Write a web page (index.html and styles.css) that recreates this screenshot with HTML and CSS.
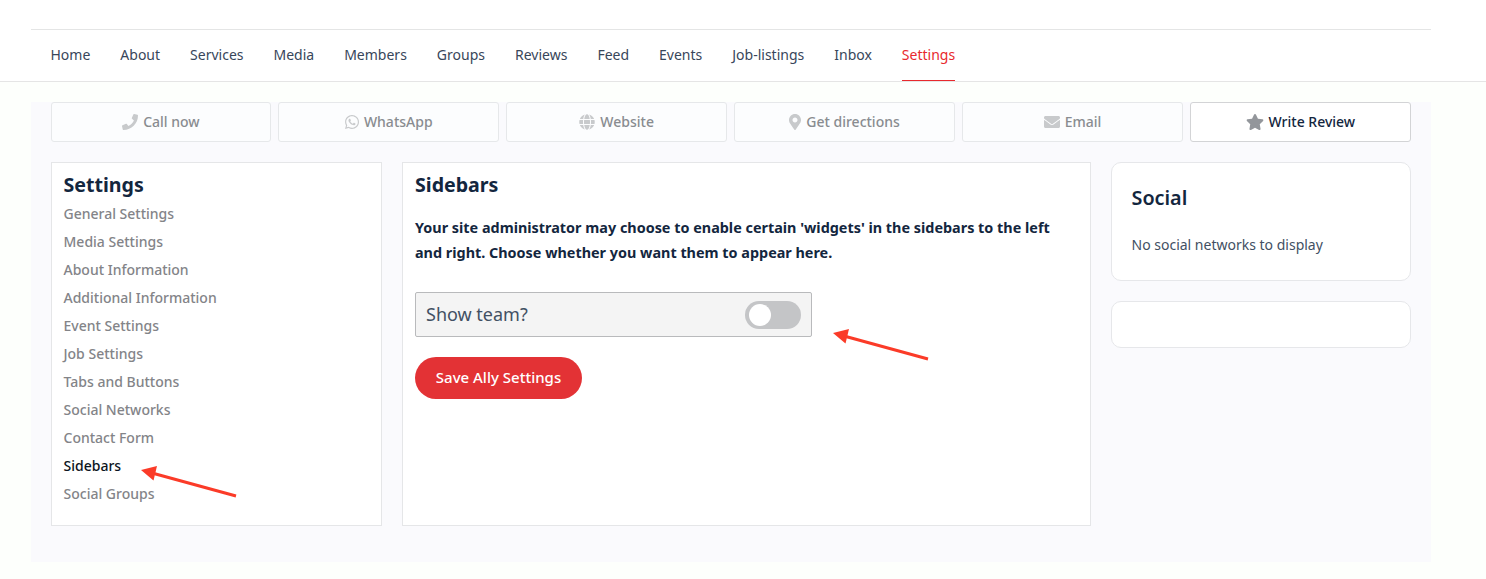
FILE: index.html
```html
<!DOCTYPE html>
<html lang="en">
<head>
<meta charset="utf-8">
<title>Settings – Sidebars</title>
<link rel="stylesheet" href="styles.css">
</head>
<body>
<header class="header">
  <nav class="nav">
    <a>Home</a><a>About</a><a>Services</a><a>Media</a><a>Members</a><a>Groups</a><a>Reviews</a><a>Feed</a><a>Events</a><a>Job-listings</a><a>Inbox</a><a class="current">Settings</a>
  </nav>
</header>
<main class="page">
  <div class="actions">
    <a class="action"><svg width="16" height="16" viewBox="0 0 512 512"><path d="M493.4 24.6l-104-24c-11.3-2.600-22.900 3.300-27.500 13.900l-48 112c-4.200 9.800-1.400 21.300 6.900 28l60.600 49.600c-36 76.700-98.900 140.500-177.200 177.200l-49.600-60.600c-6.800-8.300-18.200-11.100-28-6.900l-112 48C3.900 366.500-2 378.100.6 389.400l24 104C27.100 504.200 36.700 512 48 512c256.100 0 464-207.500 464-464 0-11.200-7.700-20.900-18.600-23.400z"/></svg><span>Call now</span></a>
    <a class="action"><svg width="14" height="16" viewBox="0 0 448 512"><path d="M380.900 97.100C339 55.100 283.200 32 223.900 32c-122.400 0-222 99.600-222 222 0 39.100 10.200 77.300 29.600 111L0 480l117.700-30.900c32.400 17.700 68.900 27 106.100 27h.1c122.300 0 224.100-99.600 224.100-222 0-59.300-25.200-115-67.100-157zm-157 341.600c-33.200 0-65.700-8.900-94-25.700l-6.700-4-69.800 18.300L72 359.200l-4.400-7c-18.500-29.400-28.200-63.300-28.200-98.200 0-101.700 82.800-184.500 184.600-184.500 49.300 0 95.600 19.200 130.400 54.100 34.800 34.900 56.200 81.200 56.100 130.500 0 101.800-84.900 184.600-186.600 184.600zm101.200-138.200c-5.500-2.800-32.800-16.200-37.900-18-5.100-1.900-8.800-2.800-12.500 2.800-3.700 5.600-14.300 18-17.600 21.800-3.200 3.700-6.500 4.200-12 1.400-32.600-16.300-54-29.100-75.500-66-5.700-9.800 5.700-9.100 16.300-30.300 1.800-3.700.9-6.900-.5-9.700-1.400-2.800-12.500-30.100-17.100-41.200-4.500-10.800-9.100-9.300-12.500-9.500-3.200-.2-6.900-.2-10.600-.2-3.700 0-9.700 1.400-14.800 6.900-5.100 5.600-19.400 19-19.400 46.300 0 27.300 19.900 53.700 22.600 57.400 2.800 3.700 39.100 59.700 94.800 83.800 35.200 15.200 49 16.500 66.600 13.900 10.700-1.600 32.800-13.400 37.400-26.400 4.600-13 4.600-24.100 3.200-26.400-1.300-2.500-5-3.900-10.500-6.600z"/></svg><span>WhatsApp</span></a>
    <a class="action"><svg width="16" height="16" viewBox="0 0 496 512"><path d="M336.500 160C322 70.700 287.800 8 248 8s-74 62.700-88.500 152h177zM152 256c0 22.200 1.200 43.500 3.300 64h185.300c2.100-20.500 3.300-41.800 3.300-64s-1.200-43.500-3.300-64H155.300c-2.100 20.500-3.300 41.800-3.300 64zm324.700-96c-28.600-67.900-86.500-120.400-158-141.600 24.400 33.800 41.200 84.700 50 141.600h108zM177.200 18.400C105.800 39.600 47.800 92.100 19.300 160h108c8.700-56.900 25.500-107.800 49.900-141.600zM487.400 192H372.700c2.100 21 3.300 42.500 3.300 64s-1.200 43-3.300 64h114.600c5.500-20.500 8.600-41.800 8.600-64s-3.100-43.500-8.500-64zM120 256c0-21.500 1.200-43 3.300-64H8.600C3.200 212.500 0 233.800 0 256s3.200 43.500 8.600 64h114.600c-2-21-3.200-42.500-3.200-64zm39.500 96c14.500 89.300 48.700 152 88.500 152s74-62.700 88.500-152h-177zm159.300 141.600c71.400-21.200 129.400-73.700 158-141.600h-108c-8.800 56.900-25.600 107.800-50 141.600zM19.300 352c28.600 67.900 86.500 120.400 158 141.600-24.400-33.800-41.200-84.700-50-141.600h-108z"/></svg><span>Website</span></a>
    <a class="action"><svg width="12" height="16" viewBox="0 0 384 512"><path d="M172.300 501.700C27 291 0 269.400 0 192 0 86 86 0 192 0s192 86 192 192c0 77.400-27 99-172.300 309.700-9.500 13.800-29.900 13.800-39.400 0zM192 272c44.200 0 80-35.800 80-80s-35.800-80-80-80-80 35.800-80 80 35.800 80 80 80z"/></svg><span>Get directions</span></a>
    <a class="action"><svg width="16" height="16" viewBox="0 0 512 512"><path d="M502.300 190.800c3.900-3.100 9.700-.2 9.700 4.700V400c0 26.500-21.500 48-48 48H48c-26.500 0-48-21.500-48-48V195.600c0-5 5.700-7.800 9.700-4.700 22.400 17.400 52.100 39.500 154.100 113.600 21.100 15.400 56.700 47.800 92.200 47.600 35.700.3 72-32.800 92.300-47.600 102-74.100 131.600-96.300 154-113.700zM256 320c23.200.4 56.600-29.200 73.400-41.400 132.700-96.300 142.800-104.700 173.400-128.700 5.800-4.500 9.200-11.500 9.200-18.900v-19c0-26.500-21.500-48-48-48H48c-26.500 0-48 21.500-48 48v19c0 7.400 3.400 14.300 9.200 18.900 30.600 23.900 40.700 32.400 173.400 128.700 16.800 12.200 50.200 41.800 73.400 41.400z"/></svg><span>Email</span></a>
    <a class="action enabled"><svg width="18" height="16" viewBox="0 0 576 512"><path d="M259.300 17.800L194 150.200 47.900 171.500c-26.200 3.800-36.700 36.100-17.700 54.600l105.700 103-25 145.500c-4.500 26.300 23.200 46 46.400 33.700L288 439.600l130.700 68.700c23.200 12.200 50.900-7.400 46.400-33.700l-25-145.500 105.700-103c19-18.500 8.500-50.800-17.700-54.600L382 150.200 316.700 17.800c-11.700-23.600-45.600-23.900-57.400 0z"/></svg><span>Write Review</span></a>
  </div>
  <div class="columns">
    <aside class="panel">
      <h2>Settings</h2>
      <ul class="menu">
        <li>General Settings</li><li>Media Settings</li><li>About Information</li><li>Additional Information</li><li>Event Settings</li><li>Job Settings</li><li>Tabs and Buttons</li><li>Social Networks</li><li>Contact Form</li><li class="current">Sidebars</li><li>Social Groups</li>
      </ul>
    </aside>
    <section class="panel">
      <h2>Sidebars</h2>
      <p class="intro">Your site administrator may choose to enable certain 'widgets' in the sidebars to the left<br>and right. Choose whether you want them to appear here.</p>
      <div class="option"><span>Show team?</span><span class="switch"></span></div>
      <button class="save">Save Ally Settings</button>
    </section>
    <aside class="side">
      <div class="card">
        <h2>Social</h2>
        <p>No social networks to display</p>
      </div>
      <div class="card blank"></div>
    </aside>
  </div>
</main>
<svg class="arrow arrow-menu" width="96" height="32" viewBox="0 0 96 32"><path class="shaft" d="M11 7L95 30"/><path d="M0 4L16 0L12.500 14.500Z"/></svg>
<svg class="arrow arrow-option" width="96" height="32" viewBox="0 0 96 32"><path class="shaft" d="M11 7L95 30"/><path d="M0 4L16 0L12.500 14.500Z"/></svg>
</body>
</html>
```
FILE: styles.css
```css
* { box-sizing: border-box; }
body {
  margin: 0;
  height: 579px;
  overflow: hidden;
  background: #fdfffc;
  font: 500 14px/20px "Noto Sans", sans-serif;
  color: #425063;
}
h2, p, ul { margin: 0; padding: 0; }
h2 { font-size: 19.600px; line-height: 28px; font-weight: 700; color: #13263e; }
.header { height: 82px; padding: 29px 55px 0 31px; background: #fff; border-bottom: 1px solid #e5e5e5; }
.nav { height: 52px; padding: 0 19.500px; display: flex; gap: 30px; border-top: 1px solid #e4e5e5; font-weight: 400; color: #38465a; }
.nav a { height: 51px; line-height: 50px; white-space: nowrap; }
.nav .current { color: #e8292d; border-bottom: 1px solid #e8292d; }
.page { width: 1400px; height: 460px; margin: 20px 0 0 31px; padding: 0 20.300px 0 19.500px; background: #fafafd; }
.actions { display: grid; grid-template-columns: repeat(6, 1fr); gap: 7.200px; }
.action {
  height: 40px;
  display: flex; align-items: center; justify-content: center; gap: 5px;
  background: #fcfdfe; border: 1px solid #e6e8ea; border-radius: 3px;
  color: #898c90;
}
.action svg { fill: #c8cacc; }
.action.enabled { background: #fff; border-color: #d3d4d6; color: #13263e; }
.action.enabled svg { fill: #93969b; }
.columns { display: grid; grid-template-columns: 331.500px 689px 300px; gap: 20px; margin-top: 20px; align-items: start; }
.panel { height: 364px; padding: 8px 12px; background: #fff; border: 1px solid #e5e6e8; }
.menu { margin-top: 1px; list-style: none; line-height: 28px; color: #838488; font-weight: 500; }
.menu .current { color: #0b1422; }
.intro { margin-top: 16px; font-size: 14.400px; font-weight: 700; line-height: 25px; color: #13263e; white-space: nowrap; }
.option {
  width: 397px; height: 45px; margin-top: 27px; padding: 0 10px;
  display: flex; align-items: center; justify-content: space-between;
  background: #f4f4f4; border: 1px solid #b9babc; border-radius: 2px;
  font-size: 18px; font-weight: 400;
}
.option span:first-child { margin-top: -1px; }
.switch { width: 56px; height: 28px; padding: 3px 4px; background: #c4c5c7; border-radius: 14px; }
.switch::before { content: ""; display: block; width: 22px; height: 22px; border-radius: 50%; background: #fff; }
.save {
  display: block; width: 167px; height: 42px; margin-top: 20px; padding: 0 0 2px;
  border: 0; border-radius: 21px; background: #e33235; color: #fff;
  font: 500 15px/20px "Noto Sans", sans-serif;
}
.side { display: grid; gap: 20px; }
.card { height: 119px; padding: 21px 19.500px; background: #fff; border: 1px solid #e6e7ea; border-radius: 10px; font-weight: 400; }
.card h2 { font-size: 19.800px; font-weight: 600; }
.card p { margin-top: 23px; }
.card.blank { height: 47px; }
.arrow { position: absolute; fill: #fb3b28; overflow: visible; }
.shaft { fill: none; stroke: #fb3b28; stroke-width: 3; }
.arrow-menu { left: 141px; top: 465.500px; }
.arrow-option { left: 833px; top: 328.500px; }
```
